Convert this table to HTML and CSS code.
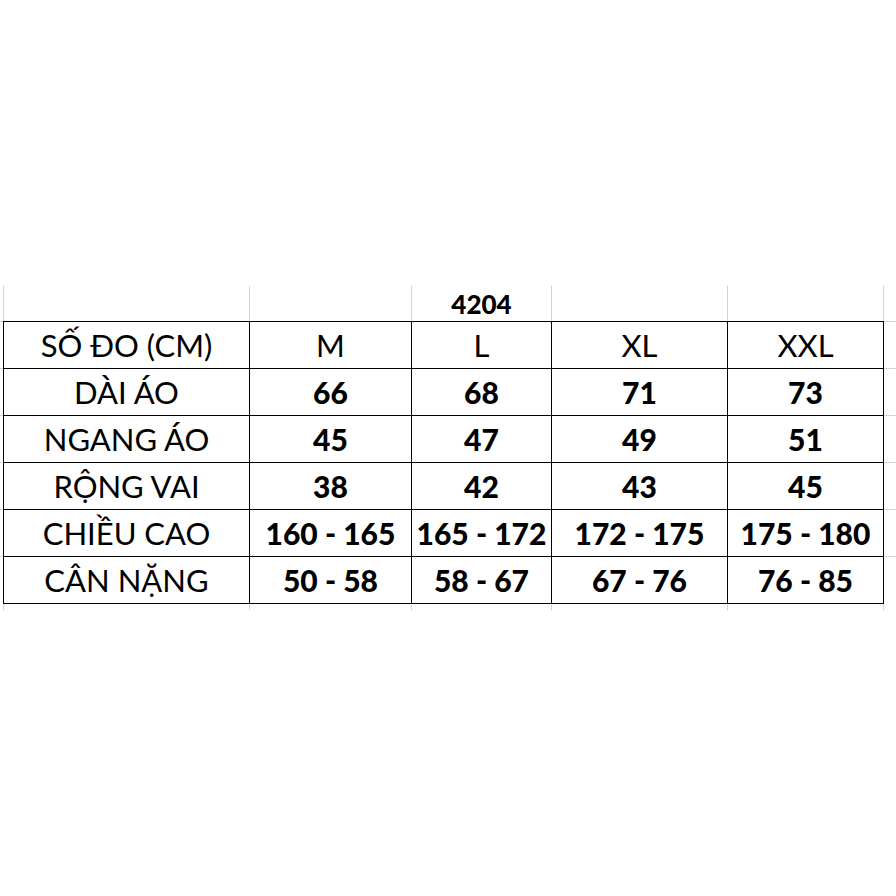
FILE: index.html
```html
<!DOCTYPE html>
<html>
<head>
<meta charset="utf-8">
<link rel="stylesheet" href="styles.css">
</head>
<body>
<div class="sheet">
  <div class="c stub"></div>
  <div class="c g"></div>
  <div class="c g"></div>
  <div class="c g code">4204</div>
  <div class="c g"></div>
  <div class="c g gr"></div>
  <div class="c stub"></div>

  <div class="c stub t"></div>
  <div class="c b lbl">SỐ ĐO (CM)</div>
  <div class="c b lbl">M</div>
  <div class="c b lbl">L</div>
  <div class="c b lbl">XL</div>
  <div class="c b br lbl">XXL</div>
  <div class="c stub t"></div>

  <div class="c stub t"></div>
  <div class="c b lbl">DÀI ÁO</div>
  <div class="c b num">66</div>
  <div class="c b num">68</div>
  <div class="c b num">71</div>
  <div class="c b br num">73</div>
  <div class="c stub t"></div>

  <div class="c stub t"></div>
  <div class="c b lbl">NGANG ÁO</div>
  <div class="c b num">45</div>
  <div class="c b num">47</div>
  <div class="c b num">49</div>
  <div class="c b br num">51</div>
  <div class="c stub t"></div>

  <div class="c stub t"></div>
  <div class="c b lbl">RỘNG VAI</div>
  <div class="c b num">38</div>
  <div class="c b num">42</div>
  <div class="c b num">43</div>
  <div class="c b br num">45</div>
  <div class="c stub t"></div>

  <div class="c stub t"></div>
  <div class="c b lbl">CHIỀU CAO</div>
  <div class="c b num">160 - 165</div>
  <div class="c b num">165 - 172</div>
  <div class="c b num">172 - 175</div>
  <div class="c b br num">175 - 180</div>
  <div class="c stub t"></div>

  <div class="c stub t"></div>
  <div class="c b bb lbl">CÂN NẶNG</div>
  <div class="c b bb num">50 - 58</div>
  <div class="c b bb num">58 - 67</div>
  <div class="c b bb num">67 - 76</div>
  <div class="c b bb br num">76 - 85</div>
  <div class="c stub t"></div>

  <div class="c tick0"></div>
  <div class="c tick"></div>
  <div class="c tick"></div>
  <div class="c tick"></div>
  <div class="c tick"></div>
  <div class="c tick gr"></div>
  <div class="c tick0"></div>
</div>
</body>
</html>
```
FILE: styles.css
```css
html, body {
  margin: 0;
  padding: 0;
  background: #ffffff;
}
body {
  width: 896px;
  height: 896px;
  overflow: hidden;
  font-family: Lato, "Liberation Sans", sans-serif;
  color: #000000;
}
.sheet {
  padding-top: 286px;
  display: grid;
  grid-template-columns: 3px 246px 162px 140px 176px 157px 12px;
  grid-template-rows: 35px 47px 47px 47px 47px 47px 48px 6px;
}
.c {
  box-sizing: border-box;
  display: flex;
  align-items: center;
  justify-content: center;
  white-space: nowrap;
}
.g {
  border-left: 1px solid #d4d4d4;
}
.gr {
  border-right: 1px solid #d4d4d4;
}
.t {
  border-top: 1px solid #d4d4d4;
}
.b {
  border-left: 1px solid #000000;
  border-top: 1px solid #000000;
}
.br {
  border-right: 1px solid #000000;
}
.bb {
  border-bottom: 1px solid #000000;
}
.tick {
  border-left: 1px solid #d4d4d4;
}
.code {
  font-weight: 900;
  font-size: 26px;
  padding-top: 1px;
}
.lbl {
  font-size: 31px;
  font-weight: 400;
}
.num {
  font-size: 30px;
  font-weight: 900;
}
```
